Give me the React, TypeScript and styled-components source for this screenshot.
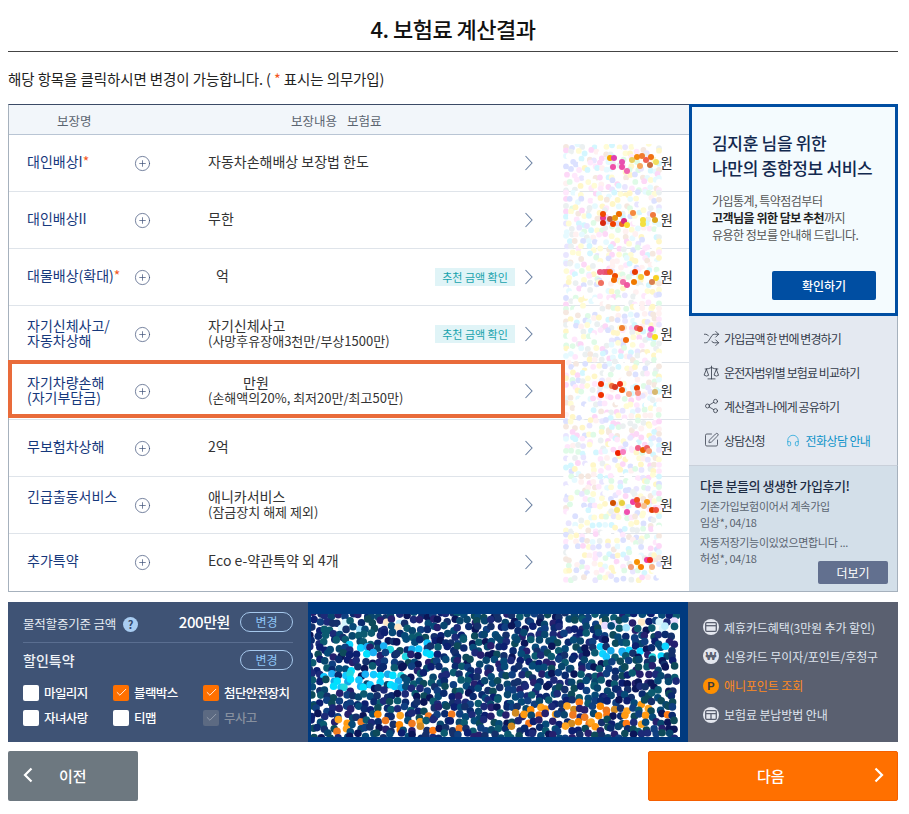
import React from "react";
import styled, { createGlobalStyle } from "styled-components";
import { Check, CirclePlus, Headphones, Scale, Share2, Shuffle, SquarePen } from "lucide-react";

const FONT = `"Noto Sans CJK KR", "Noto Sans", sans-serif`;

// small seeded random so the masked areas come out the same every run
function makeRandom(seed: number) {
  let s = seed;
  return () => {
    s = (s * 16807) % 2147483647;
    return (s - 1) / 2147483646;
  };
}

function pick(list: string[], r: number) {
  return list[Math.floor(r * list.length)];
}

type Dot = { x: number; y: number; r: number; c: string };

const PASTEL = ["#ffe8fc", "#fdd8f7", "#e6faff", "#d4f7ff", "#fffcd6", "#fff7c8", "#e9e6ff", "#dce1ff", "#dffbe7", "#f5e8e0", "#ffffff", "#ffffff", "#ffffff", "#fff1f1", "#ebf0f1"];
const DARK = ["#0a2a6e", "#0c1f70", "#08466e", "#0b5a70", "#14306b", "#0a1558", "#1c2a78", "#0f3f80", "#0d4a5a", "#26206e", "#064a78"];
const CYAN = ["#12c8ff", "#0ad4ff", "#1ab0f5", "#00e0ff", "#22d8e0", "#14a8e8"];
const ORANGE = ["#ff9a12", "#ff8a00", "#ffa520", "#f07a20", "#ff7a14", "#d08a20"];
const PALE = ["#bdeeff", "#e8dcff", "#9fe4ff", "#ffe9c8", "#d8f6ff"];

const HOT: [number, number, string][] = [
  [610, 158, "#f5a500"], [614, 158, "#e040b0"], [613, 167, "#ee50a8"], [622, 162, "#e850b0"], [622, 167, "#ec4ea8"], [627, 171, "#f068b0"],
  [632, 160, "#e8d060"], [637, 157, "#f58a10"], [642, 156, "#f07a30"], [646, 160, "#f06050"], [651, 157, "#f07010"], [650, 165, "#cc7040"], [640, 166, "#f8a860"], [656, 162, "#f0e060"],
  [603, 218, "#e83a90"], [603, 223, "#d82a10"], [603, 214, "#f04a00"], [610, 219, "#c06040"], [615, 218, "#e89a10"], [613, 224, "#f04000"], [619, 214, "#f06a00"], [622, 224, "#f06a20"], [624, 221, "#d82a80"], [627, 225, "#fadc30"], [633, 213, "#f58a40"], [643, 220, "#f4e040"], [653, 215, "#f07a40"], [655, 220, "#dca820"], [643, 224, "#f4e040"],
  [600, 272, "#e85a80"], [604, 272, "#e85a80"], [607, 272, "#e8506a"], [610, 272, "#f06010"], [615, 276, "#f04a00"], [614, 280, "#f06a00"], [623, 282, "#f070a8"], [627, 285, "#f058a0"], [635, 272, "#e83a00"], [634, 282, "#f07a00"], [641, 277, "#f8d040"], [647, 273, "#f05a10"], [601, 283, "#f07060"], [656, 278, "#f8d020"], [652, 282, "#d88050"],
  [622, 328, "#f08030"], [637, 328, "#f06070"], [640, 329, "#e85030"], [651, 329, "#f060e0"], [626, 340, "#f06a10"], [650, 335, "#f8a0d0"], [655, 337, "#f8e020"],
  [601, 384, "#f03000"], [601, 395, "#f03000"], [612, 386, "#f07040"], [615, 387, "#d83a20"], [620, 384, "#f03010"], [622, 390, "#f05000"], [637, 388, "#e84000"], [629, 394, "#f8b090"], [638, 393, "#f89080"], [655, 392, "#d8b870"],
  [618, 453, "#f02000"], [623, 452, "#f880c0"], [638, 448, "#f06088"], [643, 450, "#e86000"], [647, 448, "#f06060"], [649, 451, "#f8a080"],
  [613, 503, "#d05000"], [622, 503, "#e8d040"], [633, 502, "#f040a0"], [637, 500, "#f05020"], [638, 505, "#f05050"], [647, 502, "#f8a020"], [644, 506, "#f8c090"], [652, 510, "#e04000"], [656, 510, "#f05040"], [627, 512, "#f050b0"], [617, 510, "#f8e880"],
  [637, 562, "#f89000"], [641, 567, "#f88000"], [647, 560, "#f040a0"], [650, 560, "#f03020"], [652, 567, "#f8b080"], [631, 567, "#f0a080"],
];

function speckleDots(): Dot[] {
  const rnd = makeRandom(4711);
  const dots: Dot[] = [];
  for (let y = 2; y < 440; y += 6) {
    for (let x = 2; x < 99; x += 6) {
      dots.push({
        x: Math.max(3, Math.min(96, x + rnd() * 5 - 2.5)),
        y: y + rnd() * 5 - 2.5,
        r: 2.9,
        c: pick(PASTEL, rnd()),
      });
    }
  }
  HOT.forEach(([x, y, c]) => dots.push({ x: x - 563, y: y - 144, r: 3, c }));
  return dots;
}

function inBox(x: number, y: number, x0: number, y0: number, x1: number, y1: number) {
  return x >= x0 && x <= x1 && y >= y0 && y <= y1;
}

function mosaicDots(): Dot[] {
  const rnd = makeRandom(90210);
  const dots: Dot[] = [];
  for (let y = 1; y < 124; y += 6.7) {
    for (let x = 1; x < 369; x += 6.7) {
      const px = x + rnd() * 5.6 - 2.8;
      const py = y + rnd() * 5.6 - 2.8;
      const ax = px + 311;
      const ay = py + 614;
      const r = rnd();
      let c = pick(DARK, rnd());
      if (inBox(ax, ay, 320, 670, 402, 688) && r < 0.75) c = pick(CYAN, rnd());
      else if (inBox(ax, ay, 337, 643, 440, 657) && r < 0.35) c = pick(CYAN, rnd());
      else if (inBox(ax, ay, 340, 619, 413, 633) && r < 0.22) c = pick(PALE, rnd());
      else if (inBox(ax, ay, 600, 620, 677, 634) && r < 0.35) c = pick(PALE, rnd());
      else if (inBox(ax, ay, 600, 646, 667, 658) && r < 0.45) c = pick(CYAN, rnd());
      else if (inBox(ax, ay, 320, 714, 462, 733) && r < 0.28) c = pick(ORANGE, rnd());
      else if (inBox(ax, ay, 510, 701, 672, 727) && r < 0.38) c = pick(ORANGE, rnd());
      dots.push({ x: px, y: py, r: 3.8, c });
    }
  }
  return dots;
}

const SPECKLE = speckleDots();
const MOSAIC = mosaicDots();

function Dots({ dots }: { dots: Dot[] }) {
  return (
    <>
      {dots.map((d, i) => (
        <circle key={i} cx={d.x.toFixed(1)} cy={d.y.toFixed(1)} r={d.r} fill={d.c} />
      ))}
    </>
  );
}

function Chevron() {
  return (
    <ChevronSvg width="9" height="16" viewBox="0 0 9 16">
      <path d="M1.5 1l6.5 7-6.5 7" fill="none" stroke="#6a80a2" strokeWidth="1.1" />
    </ChevronSvg>
  );
}

function ThickChevron({ left }: { left?: boolean }) {
  return (
    <svg width="10" height="16" viewBox="0 0 10 16">
      <path d={left ? "M8.5 1.5L2 8l6.5 6.5" : "M1.5 1.5L8 8l-6.5 6.5"} fill="none" stroke="#fff" strokeWidth="2.2" />
    </svg>
  );
}

const links = [
  { icon: <Shuffle size={17} strokeWidth={1.15} />, text: "가입금액 한 번에 변경하기" },
  { icon: <Scale size={17} strokeWidth={1.15} />, text: "운전자범위별 보험료 비교하기" },
  { icon: <Share2 size={16} strokeWidth={1.15} />, text: "계산결과 나에게 공유하기" },
];

const options = [
  { label: "마일리지" },
  { label: "블랙박스", on: true },
  { label: "첨단안전장치", on: true },
  { label: "자녀사랑" },
  { label: "티맵" },
  { label: "무사고", off: true },
];

export default function App() {
  const rows = [
    { name: <>대인배상I<Star>*</Star></>, value: <>자동차손해배상 보장법 한도</> },
    { name: <>대인배상II</>, value: <>무한</> },
    { name: <>대물배상(확대)<Star>*</Star></>, value: <><Blank $w={8} />억</>, tag: true },
    { name: <>자기신체사고/<br />자동차상해</>, value: <>자기신체사고<br /><Sub>(사망후유장애3천만/부상1500만)</Sub></>, tag: true },
    { name: <>자기차량손해<br />(자기부담금)</>, value: <><Blank $w={35} />만원<br /><Sub>(손해액의20%, 최저20만/최고50만)</Sub></>, active: true },
    { name: <>무보험차상해</>, value: <>2억</> },
    { name: <NameShift>긴급출동서비스</NameShift>, value: <>애니카서비스<br /><Sub>(잠금장치 해제 제외)</Sub></> },
    { name: <>추가특약</>, value: <>Eco e-약관특약 외 4개</> },
  ];

  return (
    <>
      <Global />
      <Page>
        <Title>4. 보험료 계산결과</Title>
        <Guide>해당 항목을 클릭하시면 변경이 가능합니다. ( <Star>*</Star> 표시는 의무가입)</Guide>

        <Board>
          <Table>
            <Head>
              <HeadName>보장명</HeadName>
              <HeadValue>보장내용</HeadValue>
              <span>보험료</span>
            </Head>
            {rows.map((row, i) => (
              <Row key={i} $active={row.active}>
                <Name>{row.name}</Name>
                <CirclePlus size={17} strokeWidth={1} color="#3f5178" />
                <Value>{row.value}</Value>
                <div>{row.tag && <Tag>추천 금액 확인</Tag>}</div>
                <Chevron />
                <span />
                <Won>원</Won>
              </Row>
            ))}
            <Speckle width="99" height="440" viewBox="0 0 99 440">
              <Dots dots={SPECKLE} />
            </Speckle>
          </Table>

          <Side>
            <Promo>
              <PromoTitle>김지훈 님을 위한<br />나만의 종합정보 서비스</PromoTitle>
              <PromoText>가입통계, 특약점검부터<br /><b>고객님을 위한 담보 추천</b>까지<br />유용한 정보를 안내해 드립니다.</PromoText>
              <PromoButton>확인하기</PromoButton>
            </Promo>
            <Links>
              {links.map((l) => (
                <LinkRow key={l.text}>{l.icon}<span>{l.text}</span></LinkRow>
              ))}
              <LinkRow>
                <SquarePen size={16} strokeWidth={1.15} />
                <span>상담신청</span>
                <Phone><Headphones size={15} strokeWidth={1.2} />전화상담 안내</Phone>
              </LinkRow>
            </Links>
            <Reviews>
              <ReviewTitle>다른 분들의 생생한 가입후기!</ReviewTitle>
              <ReviewText>기존가입보험이어서 계속가입<br />임상*, 04/18</ReviewText>
              <ReviewText>자동저장기능이있었으면합니다 ...<br />허성*, 04/18</ReviewText>
              <MoreButton>더보기</MoreButton>
            </Reviews>
          </Side>
        </Board>

        <Bottom>
          <Discount>
            <DiscountTop>
              <DiscountLabel>물적할증기준 금액</DiscountLabel>
              <Help>?</Help>
              <Amount>200만원</Amount>
              <Pill>변경</Pill>
            </DiscountTop>
            <DiscountHead>
              <DiscountName>할인특약</DiscountName>
              <Pill>변경</Pill>
            </DiscountHead>
            <Options>
              {options.map((o) => (
                <Option key={o.label} $off={o.off}>
                  <Box $on={o.on} $off={o.off}>
                    {(o.on || o.off) && <Check size={13} strokeWidth={1.6} color={o.off ? "#9aa3b2" : "#fff"} />}
                  </Box>
                  {o.label}
                </Option>
              ))}
            </Options>
          </Discount>

          <Banner>
            <svg width="369" height="123" viewBox="0 0 369 123">
              <rect width="369" height="123" fill="#fff" />
              <Dots dots={MOSAIC} />
            </svg>
          </Banner>

          <Pay>
            <PayRow>
              <PayIcon>
                <svg width="12" height="10" viewBox="0 0 12 10">
                  <rect x="0.7" y="0.7" width="10.6" height="8.6" rx="1" fill="none" stroke="#5a6070" strokeWidth="1.3" />
                  <path d="M1 3.7h10" stroke="#5a6070" strokeWidth="1.3" />
                </svg>
              </PayIcon>
              제휴카드혜택(3만원 추가 할인)
            </PayRow>
            <PayRow>
              <PayIcon>₩</PayIcon>
              신용카드 무이자/포인트/후청구
            </PayRow>
            <PayRow $hot>
              <PayIcon $hot>P</PayIcon>
              애니포인트 조회
            </PayRow>
            <PayRow>
              <PayIcon>
                <svg width="12" height="10" viewBox="0 0 12 10">
                  <rect x="0.7" y="0.7" width="10.6" height="8.6" rx="1" fill="none" stroke="#5a6070" strokeWidth="1.3" />
                  <path d="M1 3.7h10M6 3.7v5.6" stroke="#5a6070" strokeWidth="1.3" />
                </svg>
              </PayIcon>
              보험료 분납방법 안내
            </PayRow>
          </Pay>
        </Bottom>

        <Nav>
          <PrevButton><ThickChevron left />이전</PrevButton>
          <NextButton>다음<ThickChevron /></NextButton>
        </Nav>
      </Page>
    </>
  );
}

const Global = createGlobalStyle`
  html, body {
    margin: 0;
    background: #fff;
    font-family: ${FONT};
  }
  *, *::before, *::after {
    box-sizing: border-box;
  }
`;

const Page = styled.div`
  width: 909px;
  height: 814px;
  padding: 0 11px 0 8px;
  overflow: hidden;
`;

const Title = styled.h1`
  margin: 0;
  height: 52px;
  padding-top: 12px;
  border-bottom: 1px solid #444;
  text-align: center;
  font-size: 22px;
  line-height: 32px;
  font-weight: 500;
  letter-spacing: -0.5px;
  color: #111;
`;

const Guide = styled.p`
  margin: 0;
  height: 52px;
  padding-top: 17px;
  font-size: 14.5px;
  line-height: 20px;
  letter-spacing: -0.1px;
  color: #222;
`;

const Star = styled.span`
  color: #f4581c;
`;

const Blank = styled.span<{ $w: number }>`
  display: inline-block;
  width: ${(p) => p.$w}px;
`;

const Board = styled.div`
  display: flex;
  height: 488px;
`;

const Table = styled.div`
  position: relative;
  width: 681px;
  border: 1px solid #a6b1bd;
  border-top: 1px solid #3b4a66;
  border-right: none;
`;

const Head = styled.div`
  display: flex;
  align-items: center;
  height: 30px;
  padding-top: 1px;
  background: #f2f6fa;
  border-bottom: 1px solid #b9c5d4;
  font-size: 12.5px;
  color: #5b6470;
`;

const HeadName = styled.span`
  margin-left: 48px;
  width: 234px;
`;

const HeadValue = styled.span`
  margin-right: 10px;
`;

const Row = styled.div<{ $active?: boolean }>`
  position: relative;
  display: grid;
  grid-template-columns: 107px 74px 227px 90px 9px 1fr auto;
  align-items: center;
  height: 57px;
  padding: 0 16px 0 18px;
  border-bottom: 1px solid #dfe4ea;

  &:last-of-type {
    border-bottom: none;
    height: 56px;
  }

  ${(p) =>
    p.$active &&
    `
    &::after {
      content: "";
      position: absolute;
      z-index: 2;
      top: -3px;
      left: -1px;
      width: 557px;
      height: 58px;
      border: 4px solid #e96b3a;
    }
  `}
`;

const Name = styled.div`
  margin-top: -3px;
  font-size: 14px;
  line-height: 15px;
  color: #16387c;
`;

const NameShift = styled.span`
  display: block;
  margin-top: -14px;
`;

const Value = styled.div`
  margin-top: -3px;
  font-size: 14px;
  line-height: 15px;
  color: #333;
`;

const Sub = styled.span`
  font-size: 13px;
`;

const Tag = styled.span`
  display: block;
  width: 80px;
  height: 18px;
  background: #e0f4f7;
  text-align: center;
  font-size: 11px;
  line-height: 18px;
  color: #17a2ac;
`;

const ChevronSvg = styled.svg`
  display: block;
  margin-left: -1px;
`;

const Won = styled.span`
  margin-top: -3px;
  font-size: 14px;
  color: #333;
`;

const Speckle = styled.svg`
  position: absolute;
  z-index: 1;
  top: 39px;
  left: 554px;
  display: block;
`;

const Side = styled.div`
  display: flex;
  flex-direction: column;
  width: 209px;
`;

const Promo = styled.div`
  height: 212px;
  padding: 23px 20px 0 20px;
  background: #f4fbfe;
  border: 3px solid #004ea2;
`;

const PromoTitle = styled.h2`
  margin: 0;
  font-size: 17px;
  line-height: 25px;
  font-weight: 500;
  letter-spacing: -0.3px;
  color: #12294f;
`;

const PromoText = styled.p`
  margin: 12px 0 0;
  font-size: 12px;
  line-height: 17px;
  letter-spacing: -0.5px;
  color: #555;

  b {
    color: #222;
    font-weight: 700;
  }
`;

const PromoButton = styled.div`
  width: 104px;
  height: 29px;
  margin: 28px 0 0 60px;
  background: #004ea2;
  border-radius: 2px;
  text-align: center;
  font-size: 12px;
  line-height: 29px;
  font-weight: 500;
  color: #fff;
`;

const Links = styled.div`
  display: flex;
  flex-direction: column;
  gap: 14px;
  height: 150px;
  padding: 12px 0 0 14px;
  background: #e4e9f1;
  border-right: 1px solid #a6b1bd;
  border-bottom: 1px solid #c9d0da;
`;

const LinkRow = styled.div`
  display: flex;
  align-items: center;
  gap: 4px;
  height: 20px;
  font-size: 12px;
  letter-spacing: -0.9px;
  color: #333b4a;

  svg {
    flex: none;
    width: 17px;
    color: #333a48;
  }
`;

const Phone = styled.span`
  display: flex;
  align-items: center;
  gap: 6px;
  margin-left: 17px;
  letter-spacing: -0.6px;
  color: #0c93c9;

  svg {
    width: 14px;
    color: #0c9fd8;
  }
`;

const Reviews = styled.div`
  position: relative;
  flex: 1;
  padding: 11px 0 0 11px;
  background: #d3dfe9;
  border-right: 1px solid #a6b1bd;
  border-bottom: 1px solid #a6b1bd;
`;

const ReviewTitle = styled.div`
  margin-bottom: 4px;
  font-size: 13px;
  line-height: 18px;
  font-weight: 500;
  letter-spacing: -0.45px;
  color: #1e2c44;
`;

const ReviewText = styled.p`
  margin: 0 0 5px;
  font-size: 11px;
  line-height: 15.5px;
  letter-spacing: -0.3px;
  color: #5a6470;
`;

const MoreButton = styled.div`
  position: absolute;
  right: 9px;
  bottom: 7px;
  width: 70px;
  height: 23px;
  background: #62708f;
  border-radius: 2px;
  text-align: center;
  font-size: 12px;
  line-height: 23px;
  color: #fff;
`;

const Bottom = styled.div`
  display: flex;
  height: 140px;
  margin-top: 10px;
`;

const Discount = styled.div`
  width: 300px;
  padding: 10px 15px 0;
  background: #3f5375;
  color: #fff;
`;

const DiscountTop = styled.div`
  display: flex;
  align-items: center;
  height: 31px;
  padding-bottom: 10px;
  border-bottom: 1px solid #5a6e90;
`;

const DiscountLabel = styled.span`
  margin-top: 3px;
  font-size: 12.5px;
  letter-spacing: -0.2px;
  color: #e6ebf3;
`;

const Help = styled.span`
  width: 15px;
  height: 15px;
  margin: 4px 0 0 7px;
  border-radius: 50%;
  background: #a9cdf2;
  text-align: center;
  font-size: 11px;
  line-height: 15px;
  font-weight: 700;
  color: #33476a;
`;

const Amount = styled.span`
  margin: -1px 10px 0 auto;
  font-size: 15px;
  font-weight: 500;
  letter-spacing: -0.4px;
`;

const Pill = styled.span`
  flex: none;
  width: 53px;
  height: 20px;
  border: 1px solid #a6c8ec;
  border-radius: 10px;
  text-align: center;
  font-size: 12px;
  line-height: 18px;
  color: #8fc6f8;
`;

const DiscountHead = styled.div`
  display: flex;
  align-items: center;
  justify-content: space-between;
  height: 20px;
  margin-top: 7px;
`;

const DiscountName = styled.span`
  font-size: 14px;
  font-weight: 500;
  color: #eef2f7;
`;

const Options = styled.div`
  display: grid;
  grid-template-columns: 90px 90px 1fr;
  grid-auto-rows: 25px;
  margin-top: 10px;
`;

const Option = styled.div<{ $off?: boolean }>`
  display: flex;
  align-items: center;
  gap: 5px;
  font-size: 12.5px;
  font-weight: 500;
  letter-spacing: -0.6px;
  color: ${(p) => (p.$off ? "#87909f" : "#fff")};
`;

const Box = styled.span<{ $on?: boolean; $off?: boolean }>`
  display: flex;
  align-items: center;
  justify-content: center;
  width: 16px;
  height: 16px;
  border-radius: 2px;
  background: ${(p) => (p.$on ? "#ff7000" : p.$off ? "#5c6a82" : "#fff")};
`;

const Banner = styled.div`
  display: flex;
  width: 380px;
  padding: 12px 8px 5px 3px;
  background: #003a7f;

  svg {
    display: block;
  }
`;

const Pay = styled.div`
  display: flex;
  flex: 1;
  flex-direction: column;
  gap: 9.3px;
  padding: 15px 0 0 15px;
  background: #5a6070;
`;

const PayRow = styled.div<{ $hot?: boolean }>`
  display: flex;
  align-items: center;
  gap: 5px;
  height: 20px;
  font-size: 12px;
  letter-spacing: -0.1px;
  color: ${(p) => (p.$hot ? "#ff8a1e" : "#dfe4ee")};
`;

const PayIcon = styled.span<{ $hot?: boolean }>`
  display: flex;
  flex: none;
  align-items: center;
  justify-content: center;
  width: 16px;
  height: 16px;
  border-radius: 50%;
  background: ${(p) => (p.$hot ? "#ff9000" : "#e4e7ef")};
  font-family: "Liberation Sans", sans-serif;
  font-size: 11px;
  font-weight: 700;
  letter-spacing: 0;
  color: ${(p) => (p.$hot ? "#3a3a3a" : "#5a6070")};
`;

const Nav = styled.div`
  display: flex;
  justify-content: space-between;
  margin-top: 9px;
`;

const PrevButton = styled.div`
  display: flex;
  align-items: center;
  gap: 26px;
  width: 130px;
  height: 50px;
  padding: 0 0 2px 15px;
  background: #6d7880;
  border-radius: 2px;
  font-size: 15px;
  font-weight: 500;
  color: #fff;
`;

const NextButton = styled.div`
  display: flex;
  align-items: center;
  justify-content: space-between;
  width: 250px;
  height: 50px;
  padding: 0 13px 2px 108px;
  background: #ff7000;
  border: 1px solid #f55f00;
  border-radius: 2px;
  font-size: 15px;
  font-weight: 500;
  color: #fff;
`;
